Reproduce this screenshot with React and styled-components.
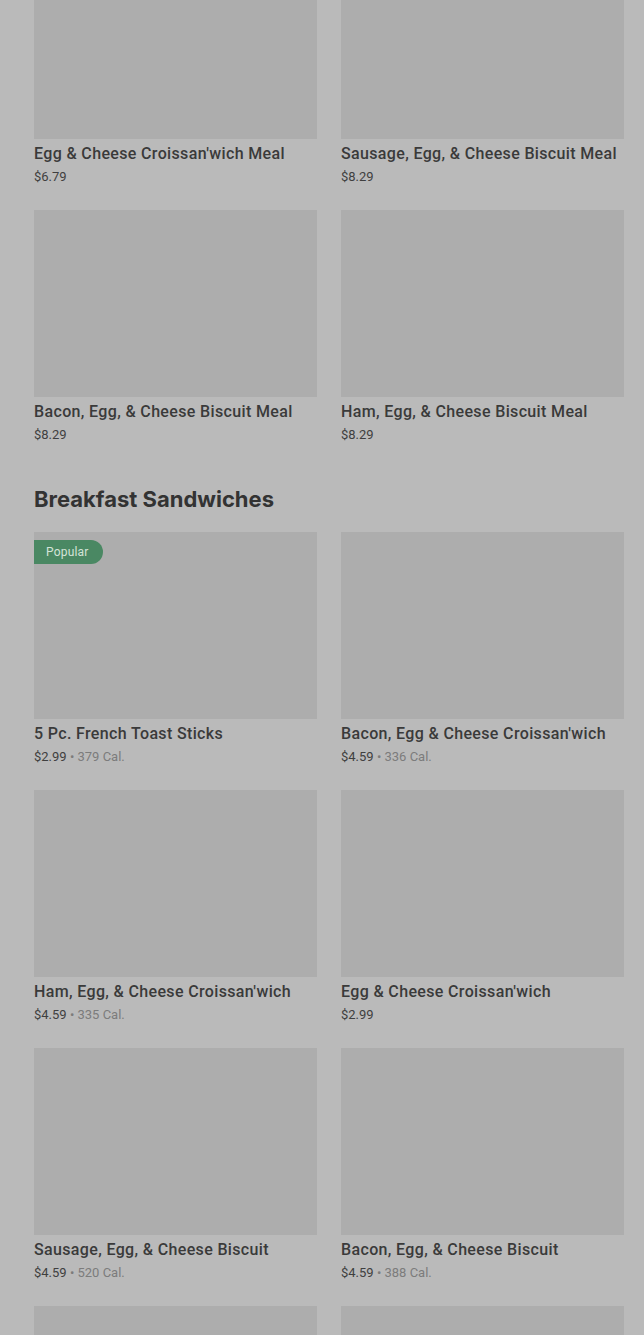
import React from 'react';
import styled, { createGlobalStyle } from 'styled-components';

const GlobalStyle = createGlobalStyle`
  html, body {
    margin: 0;
    padding: 0;
    background: #bababa;
    overflow: hidden;
  }
  body {
    font-family: Roboto, "Liberation Sans", sans-serif;
  }
`;

const Page = styled.div`
  height: 1335px;
  overflow: hidden;
  background: #bababa;
`;

const Scroller = styled.div`
  margin-top: -48px;
  padding: 0 20px 0 34px;
`;

const Section = styled.section`
  & + & {
    margin-top: 40px;
  }
`;

const SectionTitle = styled.h2`
  margin: 0 0 19px 0;
  font-family: Inter, "Liberation Sans", sans-serif;
  font-size: 22px;
  line-height: 28px;
  font-weight: 700;
  letter-spacing: 0;
  color: #333333;
`;

const Grid = styled.div`
  display: grid;
  grid-template-columns: 283px 283px;
  column-gap: 24px;
  row-gap: 23px;
`;

const Card = styled.div`
  display: flex;
  flex-direction: column;
`;

const ImageBox = styled.div`
  position: relative;
  height: 187px;
  background: #adadad;
`;

const Badge = styled.span`
  position: absolute;
  top: 8px;
  left: 0;
  height: 24px;
  padding: 0 14px 0 12px;
  display: flex;
  align-items: center;
  background: #4a8863;
  color: #d4e3d8;
  font-size: 12px;
  letter-spacing: 0.2px;
  border-radius: 0 12px 12px 0;
`;

const Name = styled.div`
  margin-top: 5px;
  font-size: 16px;
  line-height: 20px;
  font-weight: 500;
  letter-spacing: 0.35px;
  color: #3a3a3a;
  white-space: nowrap;
`;

const Meta = styled.div`
  margin-top: 3px;
  font-size: 13px;
  line-height: 20px;
  color: #3f3f3f;
`;

const Cal = styled.span`
  color: #7c7c7c;
`;

const meals = [
  { name: "Egg & Cheese Croissan'wich Meal", price: '$6.79' },
  { name: 'Sausage, Egg, & Cheese Biscuit Meal', price: '$8.29' },
  { name: 'Bacon, Egg, & Cheese Biscuit Meal', price: '$8.29' },
  { name: 'Ham, Egg, & Cheese Biscuit Meal', price: '$8.29' },
];

const sandwiches = [
  { name: '5 Pc. French Toast Sticks', price: '$2.99', cal: '379 Cal.', popular: true },
  { name: "Bacon, Egg & Cheese Croissan'wich", price: '$4.59', cal: '336 Cal.' },
  { name: "Ham, Egg, & Cheese Croissan'wich", price: '$4.59', cal: '335 Cal.' },
  { name: "Egg & Cheese Croissan'wich", price: '$2.99' },
  { name: 'Sausage, Egg, & Cheese Biscuit', price: '$4.59', cal: '520 Cal.' },
  { name: 'Bacon, Egg, & Cheese Biscuit', price: '$4.59', cal: '388 Cal.' },
  { name: '', price: '' },
  { name: '', price: '' },
];

const Item = ({ item }) => (
  <Card>
    <ImageBox>{item.popular && <Badge>Popular</Badge>}</ImageBox>
    <Name>{item.name}</Name>
    <Meta>
      {item.price}
      {item.cal && <Cal> • {item.cal}</Cal>}
    </Meta>
  </Card>
);

const App = () => (
  <Page>
    <GlobalStyle />
    <Scroller>
      <Section>
        <Grid>
          {meals.map((m, i) => <Item key={i} item={m} />)}
        </Grid>
      </Section>
      <Section>
        <SectionTitle>Breakfast Sandwiches</SectionTitle>
        <Grid>
          {sandwiches.map((m, i) => <Item key={i} item={m} />)}
        </Grid>
      </Section>
    </Scroller>
  </Page>
);

export default App;
